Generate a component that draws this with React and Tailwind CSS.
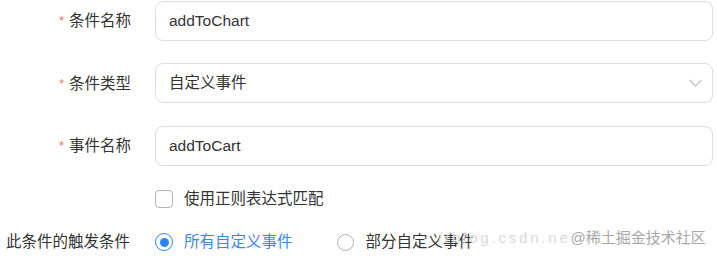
const fontStack = { fontFamily: '"Liberation Sans", "Noto Sans CJK SC", sans-serif' };

const Label = ({ children, required }) => (
  <div className="flex items-center justify-end text-[15.5px] text-[#333]">
    {required && <span className="mr-[5px] text-[13px] text-[#f27474]">*</span>}
    {children}
  </div>
);

const App = () => {
  return (
    <div
      className="relative h-[256px] w-[717px] overflow-hidden bg-white pt-[1px]"
      style={fontStack}
    >
      <div className="grid grid-cols-[131px_558px] gap-x-6">
        {/* 条件名称 */}
        <Label required>条件名称</Label>
        <div className="flex h-10 items-center rounded-lg border border-[#dcdcdc] px-[13px] text-[15.5px] text-[#333]">
          addToChart
        </div>

        {/* 条件类型 */}
        <div className="mt-[23px] flex justify-end">
          <Label required>条件类型</Label>
        </div>
        <div className="mt-[22px] flex h-10 items-center justify-between rounded-lg border border-[#dcdcdc] pl-[13px] pr-[10px] text-[15.5px] text-[#333]">
          <span>自定义事件</span>
          <svg width="13" height="8" viewBox="0 0 13 8" fill="none">
            <path d="M0.5 1 L6.5 7 L12.5 1" stroke="#bdbdbd" strokeWidth="1.1" />
          </svg>
        </div>

        {/* 事件名称 */}
        <div className="mt-[23px] flex justify-end">
          <Label required>事件名称</Label>
        </div>
        <div className="mt-[23px] flex h-10 items-center rounded-lg border border-[#dcdcdc] px-[13px] text-[15.5px] text-[#333]">
          addToCart
        </div>

        {/* 正则 */}
        <div />
        <div className="mt-[24px] flex h-[18px] items-center text-[15.5px] text-[#333]">
          <span className="h-[18px] w-[18px] rounded-[4px] border border-[#b5b5b5] bg-white" />
          <span className="ml-[11px]">使用正则表达式匹配</span>
        </div>

        {/* 触发条件 */}
        <div className="mt-[25px] flex h-[18px] items-center justify-start pl-[6px] text-[15.5px] text-[#333]">
          此条件的触发条件
        </div>
        <div className="mt-[25px] flex h-[18px] items-center text-[15.5px]">
          <span className="flex h-[18px] w-[18px] items-center justify-center rounded-full border border-[#2d84f5]">
            <span className="h-[9px] w-[9px] rounded-full bg-[#2d84f5]" />
          </span>
          <span className="ml-[11px] text-[#3a87f0]">所有自定义事件</span>
          <span className="ml-[44px] h-[17px] w-[17px] rounded-full border border-[#b0b0b0]" />
          <span className="ml-[12px] text-[#333]">部分自定义事件</span>
        </div>
      </div>

      {/* watermark */}
      <div className="pointer-events-none absolute left-[438px] top-[227px] flex items-center text-[15px]">
        <span className="tracking-[2.8px] text-[#dadada]">//blog.csdn.ne</span>
        <span className="text-[#a8a8a8]">@稀土掘金技术社区</span>
      </div>
    </div>
  );
};

export default App;
